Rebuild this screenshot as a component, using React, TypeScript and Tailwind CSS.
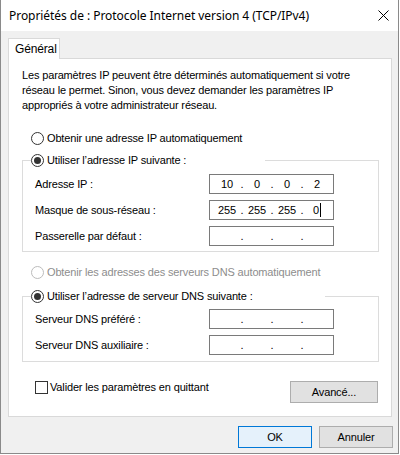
import React from "react";

// Windows 10 style "Propriétés de : Protocole Internet version 4" dialog

function Radio({ checked, disabled }: { checked?: boolean; disabled?: boolean }) {
  return (
    <span
      className={
        "flex h-[13px] w-[13px] shrink-0 items-center justify-center rounded-full border bg-white " +
        (disabled ? "border-[#bcbcbc]" : "border-[#333333]")
      }
    >
      {checked && <span className="h-[7px] w-[7px] rounded-full bg-[#333333]" />}
    </span>
  );
}

function RadioRow({ label, checked, disabled }: { label: string; checked?: boolean; disabled?: boolean }) {
  return (
    <div className="flex h-[16px] items-center gap-[3px]">
      <Radio checked={checked} disabled={disabled} />
      <span className={disabled ? "text-[#8d8d8d]" : "text-black"}>{label}</span>
    </div>
  );
}

function IpField({ values, caret }: { values?: string[]; caret?: boolean }) {
  const v = values ?? ["", "", "", ""];
  return (
    <div className="flex h-[20px] w-[125px] items-center border border-[#7a7a7a] bg-white pl-[6px]">
      {v.map((seg, i) => (
        <React.Fragment key={i}>
          <span className="flex w-[22px] items-center justify-center">
            {seg}
            {caret && i === 3 && <span className="ml-px h-[14px] w-px bg-black" />}
          </span>
          {i < 3 && <span className="w-[8px] text-center">.</span>}
        </React.Fragment>
      ))}
    </div>
  );
}

function FieldRow({ label, values, caret }: { label: string; values?: string[]; caret?: boolean }) {
  return (
    <div className="flex items-center pl-[12px]">
      <span className="w-[174px]">{label}</span>
      <IpField values={values} caret={caret} />
    </div>
  );
}

function WinButton({ label, primary, className = "" }: { label: string; primary?: boolean; className?: string }) {
  return (
    <button
      type="button"
      className={
        "flex h-[22px] w-[74px] items-center justify-center border text-black " +
        (primary ? "border-[#0078d7] bg-[#e5f1fb]" : "border-[#adadad] bg-[#e1e1e1]") +
        " " +
        className
      }
    >
      {label}
    </button>
  );
}

export default function App() {
  return (
    <div className="h-[455px] w-[400px] bg-white font-['Liberation_Sans',Arial,sans-serif] text-[11px] leading-[15px] tracking-[-0.15px] text-black">
      <div className="flex h-[454px] w-[399px] flex-col border-x border-b border-[#8a8a8a]">
        {/* title bar */}
        <div className="flex h-[31px] shrink-0 items-center justify-between bg-white pl-[8px] pr-[8px]">
          <span className="font-['Noto_Sans',sans-serif] text-[12px] tracking-[-0.05px]">
            Propriétés de : Protocole Internet version 4 (TCP/IPv4)
          </span>
          <svg width="11" height="11" viewBox="0 0 11 11" className="mr-[1px]">
            <path d="M0.5 0.5 L10.5 10.5 M10.5 0.5 L0.5 10.5" stroke="#000" strokeWidth="1" />
          </svg>
        </div>

        {/* body */}
        <div className="flex flex-1 flex-col bg-[#f0f0f0] pl-[7px] pt-[7px]">
          {/* tab strip */}
          <div className="flex">
            <div className="relative z-10 -mb-px flex h-[21px] w-[52px] items-center border-x border-t border-[#d9d9d9] bg-white pl-[6px] text-[12px]">
              Général
            </div>
          </div>

          {/* tab panel */}
          <div className="flex w-[384px] flex-col border border-[#d9d9d9] bg-white pb-[13px] pl-[13px] pr-[12px] pt-[9px]">
            <p className="whitespace-nowrap">
              Les paramètres IP peuvent être déterminés automatiquement si votre
              <br />
              réseau le permet. Sinon, vous devez demander les paramètres IP
              <br />
              appropriés à votre administrateur réseau.
            </p>

            <div className="ml-[9px] mt-[17px]">
              <RadioRow label="Obtenir une adresse IP automatiquement" />
            </div>

            <fieldset className="mt-[6px] border border-[#dcdcdc] pb-[5px]">
              <legend className="ml-[8px] w-[234px]">
                <RadioRow label="Utiliser l’adresse IP suivante :" checked />
              </legend>
              <div className="mt-[6px] flex flex-col gap-[6px]">
                <FieldRow label="Adresse IP :" values={["10", "0", "0", "2"]} />
                <FieldRow label="Masque de sous-réseau :" values={["255", "255", "255", "0"]} caret />
                <FieldRow label="Passerelle par défaut :" />
              </div>
            </fieldset>

            <div className="ml-[9px] mt-[12px]">
              <RadioRow label="Obtenir les adresses des serveurs DNS automatiquement" disabled />
            </div>

            <fieldset className="mt-[8px] border border-[#dcdcdc] pb-[6px]">
              <legend className="ml-[8px] w-[294px]">
                <RadioRow label="Utiliser l’adresse de serveur DNS suivante :" checked />
              </legend>
              <div className="mt-[5px] flex flex-col gap-[6px]">
                <FieldRow label="Serveur DNS préféré :" />
                <FieldRow label="Serveur DNS auxiliaire :" />
              </div>
            </fieldset>

            <div className="mt-[19px] flex items-start justify-between pr-px">
              <div className="ml-[13px] flex h-[13px] items-center gap-[2px]">
                <span className="h-[13px] w-[13px] border border-[#333333] bg-white" />
                <span>Valider les paramètres en quittant</span>
              </div>
              <WinButton label="Avancé..." className="w-[88px]" />
            </div>
          </div>

          {/* dialog buttons */}
          <div className="mt-[9px] flex w-[385px] justify-end gap-[7px]">
            <WinButton label="OK" primary />
            <WinButton label="Annuler" />
          </div>
        </div>
      </div>
    </div>
  );
}
